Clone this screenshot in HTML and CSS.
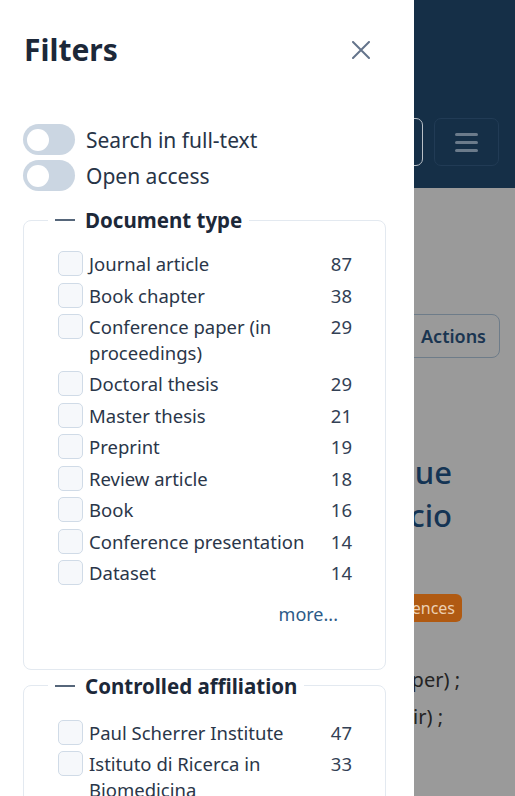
FILE: index.html
```html
<!DOCTYPE html>
<html lang="en">
<head>
    <meta charset="UTF-8">
    <meta name="viewport" content="width=device-width, initial-scale=1.0">
    <title>Search results</title>
    <link rel="stylesheet" href="styles.css">
</head>
<body>
    <!-- Page behind the filter drawer -->
    <div class="page">
        <header class="site-header">
            <button class="search-btn" aria-label="Search"></button>
            <button class="menu-btn" aria-label="Menu"><span></span><span></span><span></span></button>
        </header>
        <main class="page-body">
            <button class="actions-btn">Actions</button>
            <h1 class="record-title">
                <span>unique</span>
                <span>commercio</span>
            </h1>
            <span class="badge">Life Sciences</span>
            <p class="authors">(Developer) ;</p>
            <p class="authors second">(Chair) ;</p>
        </main>
    </div>

    <!-- Filter drawer -->
    <aside class="filters-panel">
        <div class="panel-header">
            <h2>Filters</h2>
            <button class="close-btn" aria-label="Close">
                <svg width="18" height="18" viewBox="0 0 18 18"><path d="M1 1 L17 17 M17 1 L1 17" stroke="#64748b" stroke-width="2" fill="none" stroke-linecap="round"/></svg>
            </button>
        </div>

        <div class="toggles">
            <label class="toggle-row"><span class="switch"><span class="knob"></span></span>Search in full-text</label>
            <label class="toggle-row"><span class="switch"><span class="knob"></span></span>Open access</label>
        </div>

        <fieldset class="facet">
            <legend><span class="dash"></span>Document type</legend>
            <ul class="facet-list">
                <li><span class="box"></span><span class="name">Journal article</span><span class="count">87</span></li>
                <li><span class="box"></span><span class="name">Book chapter</span><span class="count">38</span></li>
                <li><span class="box"></span><span class="name">Conference paper (in proceedings)</span><span class="count">29</span></li>
                <li><span class="box"></span><span class="name">Doctoral thesis</span><span class="count">29</span></li>
                <li><span class="box"></span><span class="name">Master thesis</span><span class="count">21</span></li>
                <li><span class="box"></span><span class="name">Preprint</span><span class="count">19</span></li>
                <li><span class="box"></span><span class="name">Review article</span><span class="count">18</span></li>
                <li><span class="box"></span><span class="name">Book</span><span class="count">16</span></li>
                <li><span class="box"></span><span class="name">Conference presentation</span><span class="count">14</span></li>
                <li><span class="box"></span><span class="name">Dataset</span><span class="count">14</span></li>
            </ul>
            <div class="more"><a href="#">more...</a></div>
        </fieldset>

        <fieldset class="facet">
            <legend><span class="dash"></span>Controlled affiliation</legend>
            <ul class="facet-list">
                <li><span class="box"></span><span class="name">Paul Scherrer Institute</span><span class="count">47</span></li>
                <li><span class="box"></span><span class="name">Istituto di Ricerca in Biomedicina</span><span class="count">33</span></li>
                <li><span class="box"></span><span class="name">Università della Svizzera italiana</span><span class="count">30</span></li>
            </ul>
        </fieldset>
    </aside>
</body>
</html>
```

FILE: styles.css
```css
/* General styling */
body {
    margin: 0;
    font-family: "Noto Sans", "Open Sans", sans-serif;
    overflow: hidden;
    height: 796px;
    background-color: #9a9a9a;
}

/* Page behind the drawer (already dimmed) */
.site-header {
    background-color: #152f47;
    height: 188px;
    box-sizing: border-box;
    padding: 0 16px 22px 0;
    display: flex;
    justify-content: flex-end;
    align-items: flex-end;
    gap: 11px;
}

.search-btn {
    width: 90px;
    height: 48px;
    background: none;
    border: 1px solid #b9c0c7;
    border-radius: 7px;
}

.menu-btn {
    width: 65px;
    height: 48px;
    background: none;
    border: 1px solid #213b55;
    border-radius: 7px;
    display: flex;
    flex-direction: column;
    justify-content: center;
    align-items: center;
    gap: 5px;
}

.menu-btn span {
    width: 23px;
    height: 3px;
    border-radius: 2px;
    background-color: #6b7b8b;
}

.page-body {
    display: flex;
    flex-direction: column;
    align-items: flex-end;
    padding-right: 15px;
}

.actions-btn {
    margin-top: 126px;
    height: 44px;
    padding: 0 13px 0 40px;
    background: none;
    border: 1px solid #6e7c89;
    border-radius: 8px;
    font-family: inherit;
    font-size: 18px;
    font-weight: 600;
    color: #1a3551;
}

.record-title {
    margin: 93px 48px 0 0;
    font-size: 31px;
    font-weight: 500;
    line-height: 43px;
    color: #143454;
    text-align: right;
    white-space: nowrap;
}

.record-title span {
    display: block;
}

.badge {
    margin: 57px 38px 0 0;
    height: 28px;
    line-height: 28px;
    padding: 0 7px 0 20px;
    border-radius: 6px;
    background-color: #b05a12;
    color: #ecd0b3;
    font-size: 16px;
}

.authors {
    margin: 39px 40px 0 0;
    line-height: 37px;
    font-size: 20px;
    color: #232323;
    white-space: nowrap;
}

.authors.second {
    margin-top: 0;
    margin-right: 57px;
}

/* Filter drawer */
.filters-panel {
    position: fixed;
    top: 0;
    left: 0;
    bottom: 0;
    width: 414px;
    box-sizing: border-box;
    padding: 0 28px 0 23px;
    background-color: #fff;
    color: #1e293b;
    overflow: hidden;
}

.panel-header {
    margin-top: 30px;
    height: 40px;
    display: flex;
    justify-content: space-between;
    align-items: center;
}

.panel-header h2 {
    margin: 0 0 0 1px;
    font-size: 30px;
    font-weight: 700;
    line-height: 40px;
    color: #1c2839;
}

.close-btn {
    background: none;
    border: none;
    padding: 0;
    margin-right: 16px;
    width: 18px;
    height: 18px;
    cursor: pointer;
}

.toggles {
    margin-top: 54px;
    display: flex;
    flex-direction: column;
    gap: 5px;
}

.toggle-row {
    display: flex;
    align-items: center;
    gap: 11px;
    height: 31px;
    font-size: 21px;
    color: #273447;
}

.switch {
    width: 52px;
    height: 31px;
    border-radius: 16px;
    background-color: #cbd6e2;
    display: flex;
    align-items: center;
    padding-left: 4px;
    box-sizing: border-box;
}

.knob {
    width: 22px;
    height: 22px;
    border-radius: 50%;
    background-color: #fff;
}

/* Facet boxes */
.facet {
    margin: 15px 0 0;
    padding: 0 33px 42px 24px;
    border: 1px solid #e3e9f0;
    border-radius: 8px;
}

.facet + .facet {
    margin-top: 2px;
}

.facet legend {
    padding: 0 7px;
    display: flex;
    align-items: center;
    gap: 10px;
    font-size: 20.5px;
    font-weight: 700;
    line-height: 28px;
    color: #1c2839;
}

.dash {
    width: 20px;
    height: 2px;
    background-color: #56667a;
}

.facet-list {
    list-style: none;
    margin: 17px 0 0;
    padding-left: 10px;
}

.facet + .facet .facet-list {
    margin-top: 20px;
}

.facet-list li {
    display: flex;
    align-items: flex-start;
    gap: 6px;
    font-size: 18.5px;
    line-height: 25.5px;
    color: #2a3649;
}

.facet-list li + li {
    margin-top: 6px;
}

.box {
    width: 25px;
    height: 25px;
    box-sizing: border-box;
    flex-shrink: 0;
    border: 1px solid #d0dbe7;
    border-radius: 5px;
    background-color: #f6f8fb;
}

.name {
    flex: 1;
}

.count {
    width: 37px;
    flex-shrink: 0;
    text-align: right;
    color: #334155;
}

.more {
    margin-top: 15px;
    text-align: right;
    padding-right: 14px;
    font-size: 18px;
    line-height: 26px;
}

.more a {
    color: #2c5a88;
    text-decoration: none;
}
```
